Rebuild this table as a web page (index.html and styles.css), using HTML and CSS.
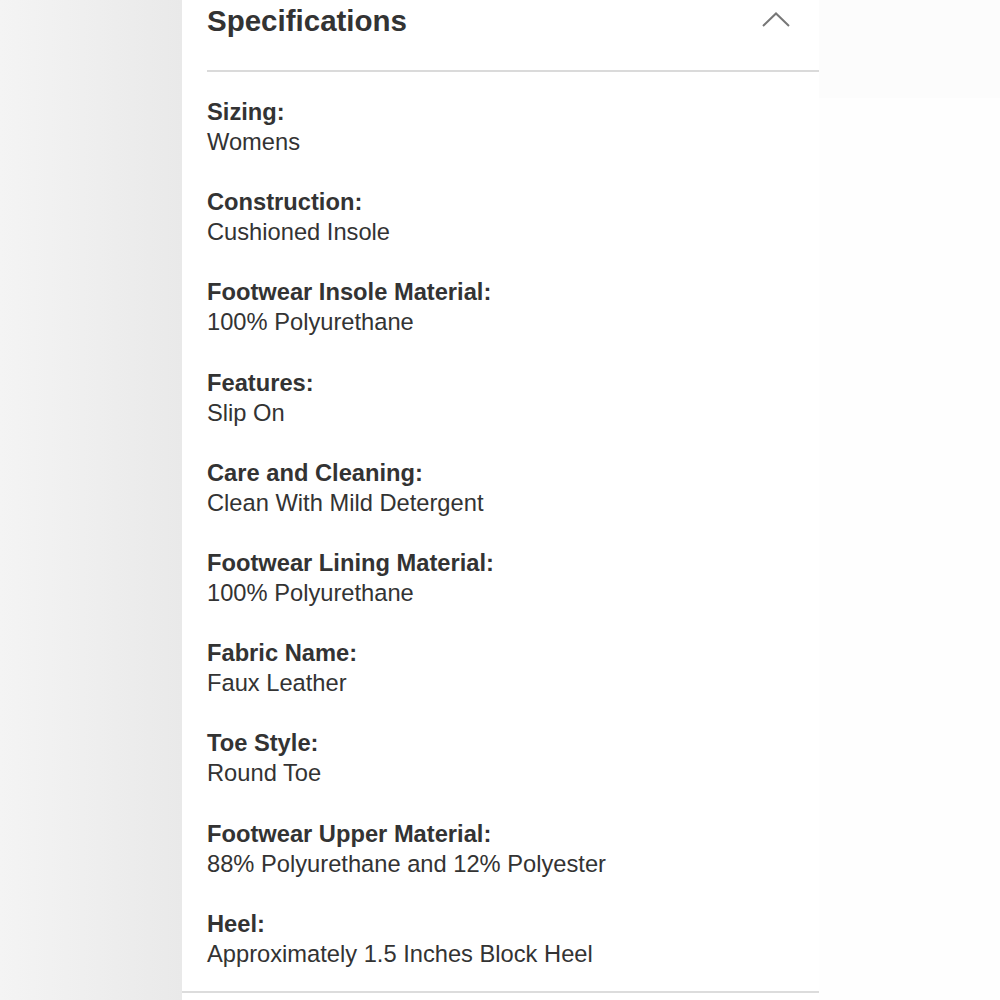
FILE: index.html
```html
<!DOCTYPE html>
<html lang="en">
<head>
	<meta charset="UTF-8">
	<meta name="viewport" content="width=device-width, initial-scale=1.0">
	<title>Specifications</title>
	<link rel="stylesheet" href="styles.css">
</head>
<body>
	<div class="side-left"></div>

	<div class="panel">
		<div class="panel-header">
			<h1>Specifications</h1>
			<svg class="chevron" width="28" height="15" viewBox="0 0 28 15">
				<polyline points="1,14 14,1.5 27,14" fill="none" stroke="#777" stroke-width="2"/>
			</svg>
		</div>
		<div class="spec-list">
			<div class="spec">
				<div class="spec-label">Sizing:</div>
				<div class="spec-value">Womens</div>
			</div>
			<div class="spec">
				<div class="spec-label">Construction:</div>
				<div class="spec-value">Cushioned Insole</div>
			</div>
			<div class="spec">
				<div class="spec-label">Footwear Insole Material:</div>
				<div class="spec-value">100% Polyurethane</div>
			</div>
			<div class="spec">
				<div class="spec-label">Features:</div>
				<div class="spec-value">Slip On</div>
			</div>
			<div class="spec">
				<div class="spec-label">Care and Cleaning:</div>
				<div class="spec-value">Clean With Mild Detergent</div>
			</div>
			<div class="spec">
				<div class="spec-label">Footwear Lining Material:</div>
				<div class="spec-value">100% Polyurethane</div>
			</div>
			<div class="spec">
				<div class="spec-label">Fabric Name:</div>
				<div class="spec-value">Faux Leather</div>
			</div>
			<div class="spec">
				<div class="spec-label">Toe Style:</div>
				<div class="spec-value">Round Toe</div>
			</div>
			<div class="spec">
				<div class="spec-label">Footwear Upper Material:</div>
				<div class="spec-value">88% Polyurethane and 12% Polyester</div>
			</div>
			<div class="spec">
				<div class="spec-label">Heel:</div>
				<div class="spec-value">Approximately 1.5 Inches Block Heel</div>
			</div>
		</div>
	</div>

	<div class="side-right">
		<div class="side-right-top"></div>
	</div>
</body>
</html>
```

FILE: styles.css
```css
* {
	box-sizing: border-box;
}
body {
	font-family: "Liberation Sans", Arial, sans-serif;
	background-color: white;
	color: #333;
	display: flex;
	flex-direction: row;
	height: 100vh;
	margin: 0;
	overflow: hidden;
}

.side-left {
	flex: 0 0 182px;
	background: linear-gradient(to right, #f4f4f4, #e9e9e9);
}
.side-right {
	flex: 1;
	background-color: #fefefe;
}
.side-right-top {
	height: 98px;
	background-color: #fcfcfc;
}

.panel {
	flex: 0 0 637px;
	display: flex;
	flex-direction: column;
	background-color: white;
	height: 993px;
	border-bottom: 2px solid #dcdcdc;
}
.panel-header {
	display: flex;
	justify-content: space-between;
	align-items: flex-start;
	height: 72px;
	margin-left: 25px;
	padding-top: 1px;
	border-bottom: 2px solid #dadada;
}
.panel-header h1 {
	margin: 0;
	font-size: 29.5px;
	line-height: 40px;
	font-weight: bold;
}
.chevron {
	margin-top: 11px;
	margin-right: 29px;
}

.spec-list {
	padding: 25px 0 0 25px;
}
.spec {
	margin-bottom: 30.2px;
	font-size: 23.7px;
	line-height: 30px;
}
.spec:last-child {
	margin-bottom: 0;
}
.spec-label {
	font-weight: bold;
}
```
